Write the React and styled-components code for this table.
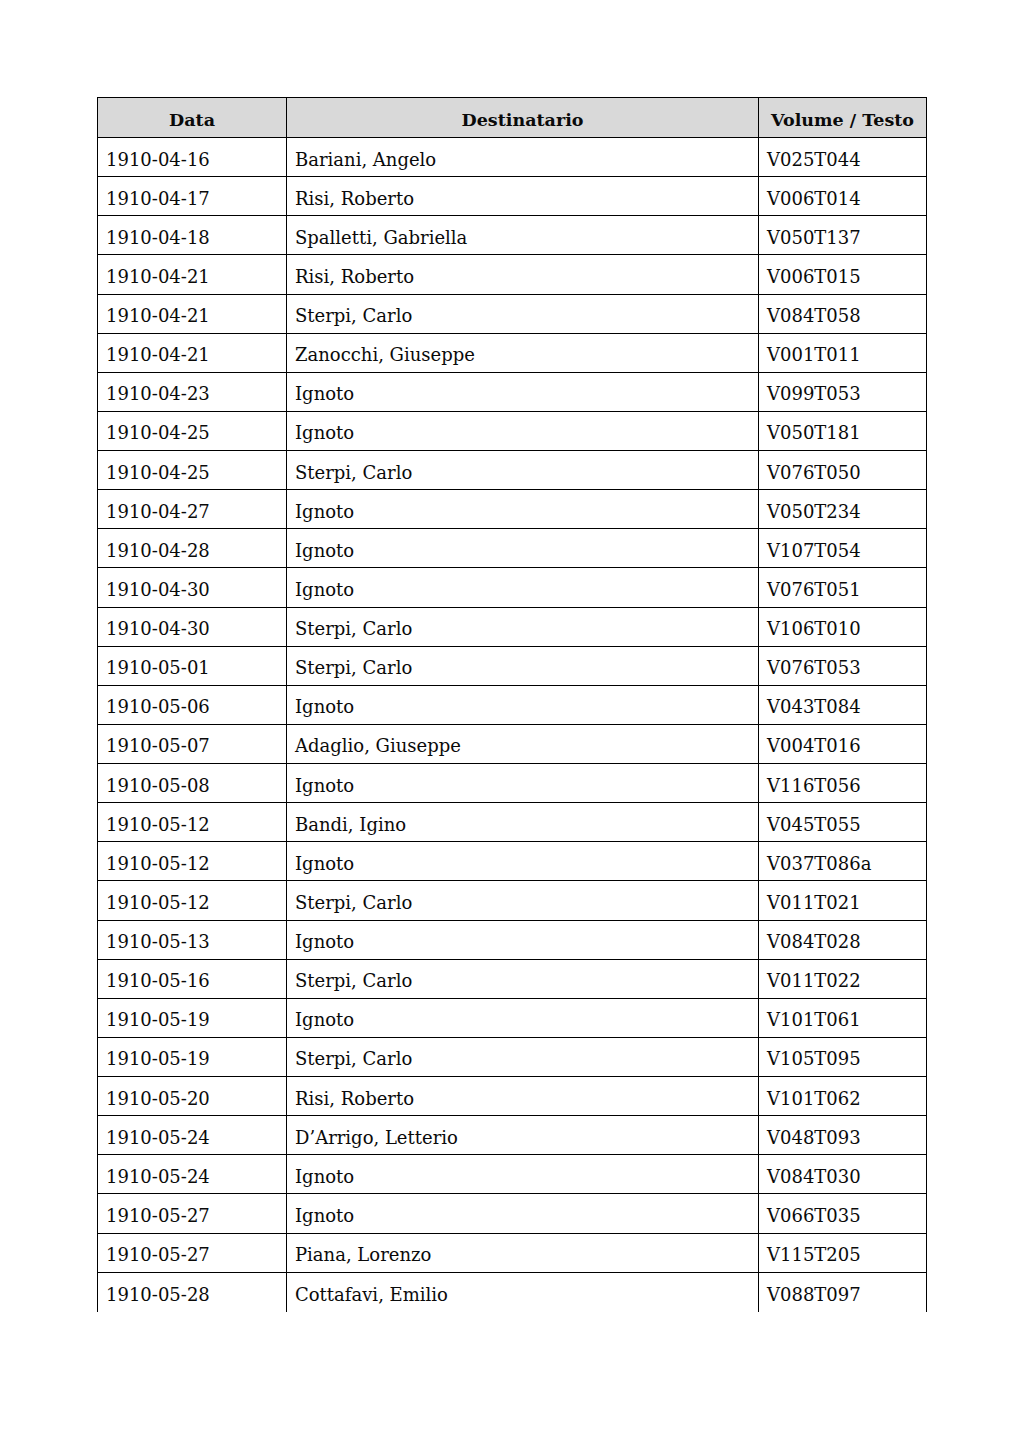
import React from "react";
import styled, { createGlobalStyle } from "styled-components";

const rows = [
  ["1910-04-16", "Bariani, Angelo", "V025T044"],
  ["1910-04-17", "Risi, Roberto", "V006T014"],
  ["1910-04-18", "Spalletti, Gabriella", "V050T137"],
  ["1910-04-21", "Risi, Roberto", "V006T015"],
  ["1910-04-21", "Sterpi, Carlo", "V084T058"],
  ["1910-04-21", "Zanocchi, Giuseppe", "V001T011"],
  ["1910-04-23", "Ignoto", "V099T053"],
  ["1910-04-25", "Ignoto", "V050T181"],
  ["1910-04-25", "Sterpi, Carlo", "V076T050"],
  ["1910-04-27", "Ignoto", "V050T234"],
  ["1910-04-28", "Ignoto", "V107T054"],
  ["1910-04-30", "Ignoto", "V076T051"],
  ["1910-04-30", "Sterpi, Carlo", "V106T010"],
  ["1910-05-01", "Sterpi, Carlo", "V076T053"],
  ["1910-05-06", "Ignoto", "V043T084"],
  ["1910-05-07", "Adaglio, Giuseppe", "V004T016"],
  ["1910-05-08", "Ignoto", "V116T056"],
  ["1910-05-12", "Bandi, Igino", "V045T055"],
  ["1910-05-12", "Ignoto", "V037T086a"],
  ["1910-05-12", "Sterpi, Carlo", "V011T021"],
  ["1910-05-13", "Ignoto", "V084T028"],
  ["1910-05-16", "Sterpi, Carlo", "V011T022"],
  ["1910-05-19", "Ignoto", "V101T061"],
  ["1910-05-19", "Sterpi, Carlo", "V105T095"],
  ["1910-05-20", "Risi, Roberto", "V101T062"],
  ["1910-05-24", "D\u2019Arrigo, Letterio", "V048T093"],
  ["1910-05-24", "Ignoto", "V084T030"],
  ["1910-05-27", "Ignoto", "V066T035"],
  ["1910-05-27", "Piana, Lorenzo", "V115T205"],
  ["1910-05-28", "Cottafavi, Emilio", "V088T097"],
];

const GlobalStyle = createGlobalStyle`
  body {
    margin: 0;
    background: #ffffff;
    font-family: "DejaVu Serif", "Liberation Serif", serif;
    color: #0a0a0a;
  }
`;

const Page = styled.div`
  width: 1024px;
  height: 1449px;
  padding: 97px 0 0 97px;
  box-sizing: border-box;
`;

const Grid = styled.div`
  display: grid;
  grid-template-columns: 189px 472px 168px;
  grid-template-rows: 40px;
  grid-auto-rows: 39.14px;
  width: 830px;
  border-top: 1px solid #000;
  border-left: 1px solid #000;
  box-sizing: border-box;
`;

const Cell = styled.div`
  display: flex;
  align-items: center;
  justify-content: ${(p) => (p.$head ? "center" : "flex-start")};
  padding: 4px 8px 0 8px;
  border-right: 1px solid #000;
  border-bottom: ${(p) => (p.$last ? "none" : "1px solid #000")};
  background: ${(p) => (p.$head ? "#d9d9d9" : "#fff")};
  font-size: ${(p) => (p.$head ? "17.5px" : "18px")};
  font-weight: ${(p) => (p.$head ? 700 : 400)};
  white-space: nowrap;
  box-sizing: border-box;
`;

const App = () => {
  return (
    <Page>
      <GlobalStyle />
      <Grid>
        <Cell $head>Data</Cell>
        <Cell $head>Destinatario</Cell>
        <Cell $head>Volume / Testo</Cell>
        {rows.map((r, i) =>
          r.map((v, j) => (
            <Cell key={i + "-" + j} $last={i === rows.length - 1}>
              {v}
            </Cell>
          ))
        )}
      </Grid>
    </Page>
  );
};

export default App;
